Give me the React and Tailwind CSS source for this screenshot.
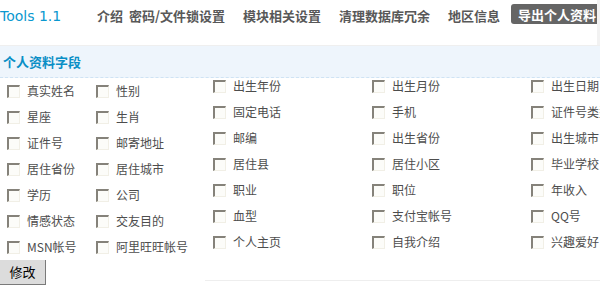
import React from 'react';

const navItems = [
  { label: '模块相关设置' },
  { label: '清理数据库冗余' },
  { label: '地区信息' },
];

const leftRows = [
  ['真实姓名', '性别'],
  ['星座', '生肖'],
  ['证件号', '邮寄地址'],
  ['居住省份', '居住城市'],
  ['学历', '公司'],
  ['情感状态', '交友目的'],
  ['MSN帐号', '阿里旺旺帐号'],
];

const rightRows = [
  ['出生年份', '出生月份', '出生日期'],
  ['固定电话', '手机', '证件号类型'],
  ['邮编', '出生省份', '出生城市'],
  ['居住县', '居住小区', '毕业学校'],
  ['职业', '职位', '年收入'],
  ['血型', '支付宝帐号', 'QQ号'],
  ['个人主页', '自我介绍', '兴趣爱好'],
];

const leftWidths = ['w-[89px]', 'w-[117px]'];
const rightWidths = ['w-[159px]', 'w-[159px]', 'flex-1'];

function Box() {
  return (
    <span className="shrink-0 w-[13px] h-[13px] border-t-2 border-l-2 border-b border-r border-t-[#85827a] border-l-[#85827a] border-b-[#f1efe6] border-r-[#f1efe6] bg-[#fcfcf9]" />
  );
}

function Field({ label, className }) {
  return (
    <label className={`flex items-center gap-[7px] h-[26px] whitespace-nowrap overflow-hidden ${className}`}>
      <Box />
      <span className="text-[12px] leading-[14px] text-[#4d4d4d]">{label}</span>
    </label>
  );
}

export default function App() {
  return (
    <div className="w-[600px] h-[286px] bg-white overflow-hidden font-['Noto_Sans_CJK_SC',sans-serif]">
      {/* header */}
      <div className="flex items-start h-[46px] border-b border-[#efefef]">
        <div className="flex items-start flex-1 min-w-0 h-[45px] pt-[6px] overflow-hidden whitespace-nowrap">
          <span className="shrink-0 font-['DejaVu_Sans',sans-serif] text-[14px] leading-[16px] text-[#0a98cf] pt-[2px] w-[97px]">Tools 1.1</span>
          <div className="flex items-center shrink-0 text-[13px] leading-[16px] font-bold text-[#585858]">
            <span className="pt-[2px]">介绍</span>
            <span className="ml-[6px] pt-[2px]">密码/文件锁设置</span>
            {navItems.map(item => (
              <span key={item.label} className="ml-[18px] pt-[2px]">{item.label}</span>
            ))}
            <span className="ml-[11px] bg-[#656565] text-white rounded-l-[3px] h-[20px] flex items-center pl-[7px] w-[87px] overflow-hidden -mt-[2px] pt-[1px]">导出个人资料</span>
          </div>
        </div>
        <div className="w-[3px] h-[45px] bg-[#f2f2f2]" />
      </div>

      {/* section title */}
      <div className="h-[32px] bg-[#eef5fc] border-b border-dashed border-[#cfe3f4] flex items-center pl-[3px]">
        <span className="text-[13px] leading-[16px] font-bold text-[#0a8fc6]">个人资料字段</span>
      </div>

      {/* fields */}
      <div className="flex">
        <div className="pl-[7px]">
          {leftRows.map((row, i) => (
            <div key={i} className="flex">
              {row.map((f, j) => <Field key={f} label={f} className={leftWidths[j]} />)}
            </div>
          ))}
        </div>
        <div className="flex-1 -mt-[5px] overflow-hidden">
          {rightRows.map((row, i) => (
            <div key={i} className="flex">
              {row.map((f, j) => <Field key={f} label={f} className={rightWidths[j]} />)}
            </div>
          ))}
        </div>
      </div>

      {/* submit */}
      <div className="flex items-end">
        <button className="w-[46px] h-[25px] bg-[#dcdcdc] border-r border-b border-[#7a7a7a] text-[13px] leading-[16px] text-black">修改</button>
        <div className="flex-1 ml-[159px] mb-[4px] h-[1px] bg-[#eeeeee]" />
      </div>
    </div>
  );
}
